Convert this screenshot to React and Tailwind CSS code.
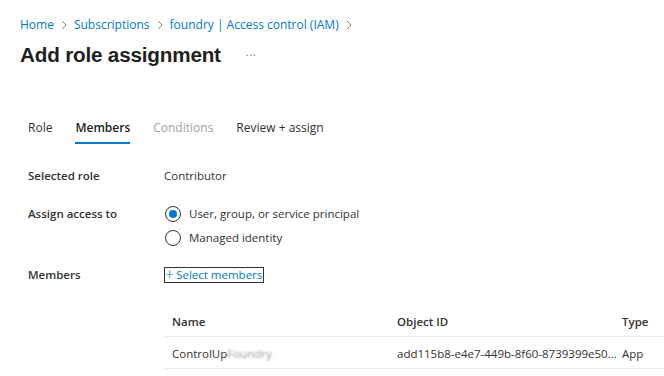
import React from 'react';

const Chevron = () => (
  <svg width="8" height="10" viewBox="0 0 8 10" className="mx-[6px]">
    <path d="M2 1l4 4-4 4" fill="none" stroke="#8a8886" strokeWidth="1" />
  </svg>
);

const Radio = ({ checked }) => (
  <span className="w-4 h-4 rounded-full border border-[#323130] flex items-center justify-center shrink-0">
    {checked && <span className="w-2 h-2 rounded-full bg-[#0078d4]" />}
  </span>
);

const App = () => {
  return (
    <div className="w-[664px] h-[376px] overflow-hidden bg-white text-[#323130]" style={{ fontFamily: '"Open Sans", "Noto Sans", sans-serif' }}>
      {/* Header */}
      <div className="pl-[20px] pt-[16px]">
        <div className="flex items-center text-[12px] leading-[18px] text-[#0078d4]">
          <span>Home</span>
          <Chevron />
          <span>Subscriptions</span>
          <Chevron />
          <span>foundry | Access control (IAM)</span>
          <Chevron />
        </div>
        <div className="flex items-center mt-[6px] h-[30px]">
          <h1 className="text-[20.7px] font-bold text-[#201f1e] tracking-[-0.2px]" style={{ fontFamily: '"Liberation Sans", Arial, sans-serif' }}>
            Add role assignment
          </h1>
          <span className="ml-[25px] text-[10px] text-[#605e5c] tracking-[1px] -mt-[6px]">...</span>
        </div>
      </div>

      {/* Tabs */}
      <div className="flex pl-[28px] mt-[42px] text-[12px] gap-[23px]">
        <div className="h-[32px] flex items-center">Role</div>
        <div className="h-[32px] flex items-center font-semibold text-[#201f1e] border-b-2 border-[#0078d4] pt-[2px]">Members</div>
        <div className="h-[32px] flex items-center text-[#a19f9d]">Conditions</div>
        <div className="h-[32px] flex items-center">Review + assign</div>
      </div>

      {/* Form */}
      <div className="pl-[28px] mt-[20px] text-[11.5px]">
        <div className="flex items-center h-[24px]">
          <div className="w-[136px] font-semibold">Selected role</div>
          <div>Contributor</div>
        </div>
        <div className="flex mt-[14px]">
          <div className="w-[136px] font-semibold h-[24px] flex items-center">Assign access to</div>
          <div className="flex flex-col">
            <div className="flex items-center h-[24px] gap-[8px] pl-[1px]">
              <Radio checked />
              <span>User, group, or service principal</span>
            </div>
            <div className="flex items-center h-[24px] gap-[8px] pl-[1px]">
              <Radio />
              <span>Managed identity</span>
            </div>
          </div>
        </div>
        <div className="flex items-center h-[24px] mt-[13px]">
          <div className="w-[136px] font-semibold">Members</div>
          <div className="flex items-center border border-[#323130] text-[#0078d4] h-[16px] pr-[1px]">
            <span className="text-[16px] leading-none font-light -mt-[2px] mr-[2px]">+</span>
            <span>Select members</span>
          </div>
        </div>
      </div>

      {/* Table */}
      <div className="ml-[164px] mt-[20px] text-[11.5px]">
        <div className="flex items-center h-[30px] border-b border-[#edebe9] font-semibold pl-[8px]">
          <div className="w-[225px]">Name</div>
          <div className="w-[225px]">Object ID</div>
          <div>Type</div>
        </div>
        <div className="flex items-center h-[32px] border-b border-[#edebe9] pl-[8px] pt-[2px]">
          <div className="w-[225px] flex items-center">
            <span>ControlUp</span>
            <span className="text-[#9a9a9a] blur-[1px]">Foundry</span>
          </div>
          <div className="w-[225px] whitespace-nowrap">add115b8-e4e7-449b-8f60-8739399e50...</div>
          <div>App</div>
        </div>
      </div>
    </div>
  );
};

export default App;
